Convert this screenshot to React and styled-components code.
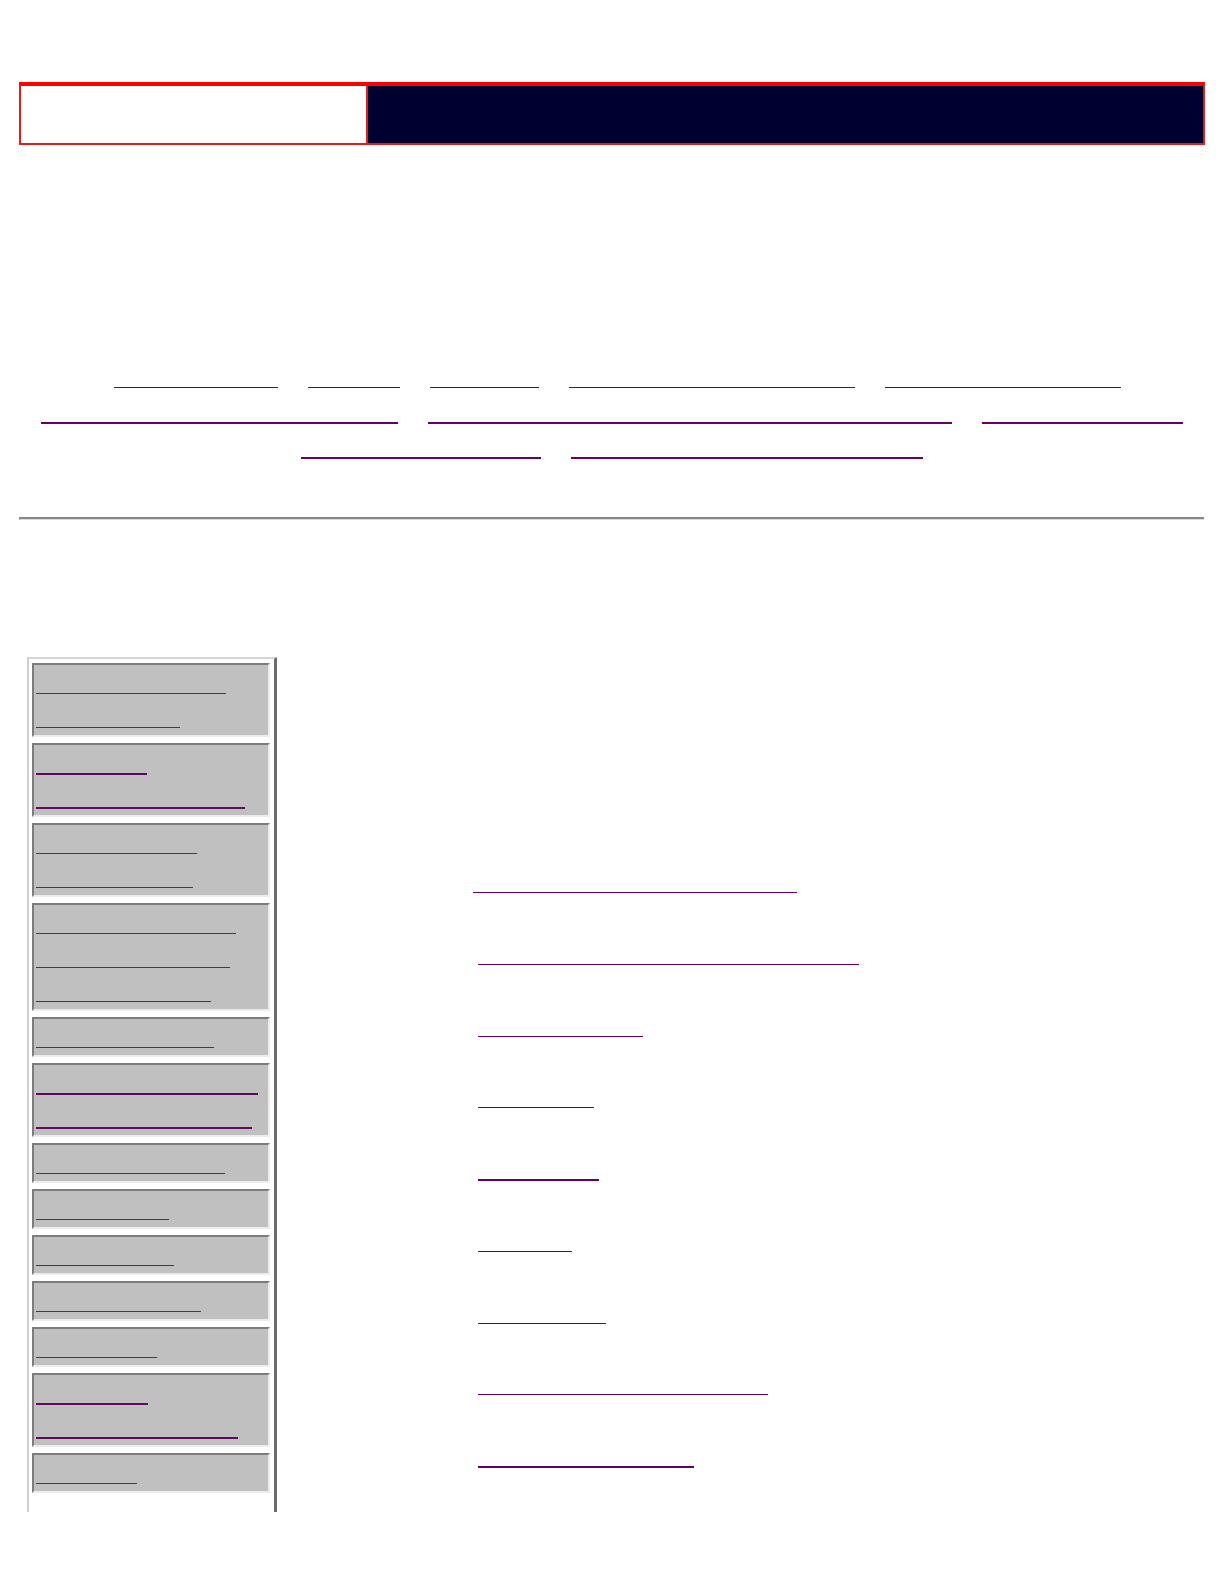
import styled, { createGlobalStyle } from "styled-components";

const GlobalStyle = createGlobalStyle`
  html, body {
    margin: 0;
    padding: 0;
    background: #ffffff;
    font-family: "Liberation Serif", serif;
  }
`;

const Page = styled.div`
  width: 1224px;
  min-height: 1584px;
  padding-top: 82px;
  box-sizing: border-box;
`;

const Banner = styled.div`
  display: flex;
  margin-left: 19px;
  width: 1186px;
  height: 63px;
  box-sizing: border-box;
  border: 2px solid #e31c1c;
  border-top: 4px solid #ff0000;
`;

const BannerLogo = styled.div`
  flex: 0 0 345px;
  background: #ffffff;
  border-right: 2px solid #e31c1c;
`;

const BannerBar = styled.div`
  flex: 1;
  background: #000030;
`;

const Nav = styled.nav`
  margin-top: 210px;
`;

const NavRow = styled.div`
  display: flex;
  justify-content: center;
  align-items: flex-start;
  gap: 30px;
  height: 35px;
  padding-left: ${(p) => p.shift || 0}px;
`;

const Link = styled.a`
  display: block;
  flex: none;
  width: ${(p) => p.w}px;
  height: ${(p) => (p.thick ? 2 : 1)}px;
  margin-top: ${(p) => p.top}px;
  background: ${(p) => p.color || "#660066"};
`;

const Rule = styled.hr`
  margin: 57px 20px 0 19px;
  height: 0;
  border: 0;
  border-top: 2px solid #878787;
  border-left: 1px solid #878787;
  border-bottom: 1px solid #dcdcdc;
`;

const Main = styled.div`
  display: flex;
  align-items: flex-start;
  margin-top: 137px;
  padding-left: 27px;
`;

const Sidebar = styled.div`
  display: flex;
  flex-direction: column;
  gap: 6px;
  width: 250px;
  box-sizing: border-box;
  padding: 4px 4px 19px 3px;
  border-top: 2px solid #d4d4d4;
  border-left: 2px solid #cfcfcf;
  border-right: 3px solid #6b6b6b;
`;

const Cell = styled.div`
  background: #c0c0c0;
  border: 2px solid;
  border-color: #7d7d7d #ececec #ececec #7d7d7d;
  padding: 0 2px 2px;
`;

const CellLine = styled.div`
  display: flex;
  align-items: flex-start;
  height: 34px;
`;

const Content = styled.div`
  padding-top: 165px;
  margin-left: 196px;
`;

const Item = styled.div`
  display: flex;
  align-items: flex-start;
  height: 71.75px;
  padding-left: ${(p) => p.indent}px;
  box-sizing: border-box;
`;

const navRows = [
  { shift: 11, thick: false, links: [164, 92, 109, 286, 236] },
  { shift: 0, thick: true, links: [357, 524, 201] },
  { shift: 0, thick: true, links: [240, 352] },
];

const sideCells = [
  { thick: false, lines: [190, 144] },
  { thick: true, lines: [111, 209] },
  { thick: false, lines: [161, 157] },
  { thick: false, lines: [200, 194, 175] },
  { thick: false, lines: [178] },
  { thick: true, lines: [222, 216] },
  { thick: false, lines: [189] },
  { thick: false, lines: [133] },
  { thick: false, lines: [138] },
  { thick: false, lines: [165] },
  { thick: false, lines: [121] },
  { thick: true, lines: [112, 202] },
  { thick: false, lines: [101] },
];

const contentLinks = [
  { w: 324, indent: 0 },
  { w: 381, indent: 5 },
  { w: 165, indent: 5 },
  { w: 116, indent: 5 },
  { w: 121, indent: 5, thick: true },
  { w: 94, indent: 5 },
  { w: 128, indent: 5 },
  { w: 290, indent: 5 },
  { w: 216, indent: 5, thick: true },
];

const App = () => {
  return (
    <>
      <GlobalStyle />
      <Page>
        <Banner>
          <BannerLogo />
          <BannerBar />
        </Banner>

        {/* top links */}
        <Nav>
          {navRows.map((row, i) => (
            <NavRow key={i} shift={row.shift}>
              {row.links.map((w, j) => (
                <Link key={j} href="#" w={w} thick={row.thick} top={32} />
              ))}
            </NavRow>
          ))}
        </Nav>

        <Rule />

        <Main>
          {/* side menu */}
          <Sidebar>
            {sideCells.map((cell, i) => (
              <Cell key={i}>
                {cell.lines.map((w, j) => (
                  <CellLine key={j}>
                    <Link
                      href="#"
                      w={w}
                      thick={cell.thick}
                      top={28}
                      color={cell.thick ? "#5e0a60" : "#7a127a"}
                    />
                  </CellLine>
                ))}
              </Cell>
            ))}
          </Sidebar>

          {/* link list */}
          <Content>
            {contentLinks.map((l, i) => (
              <Item key={i} indent={l.indent}>
                <Link href="#" w={l.w} thick={l.thick} top={70} />
              </Item>
            ))}
          </Content>
        </Main>
      </Page>
    </>
  );
};

export default App;
